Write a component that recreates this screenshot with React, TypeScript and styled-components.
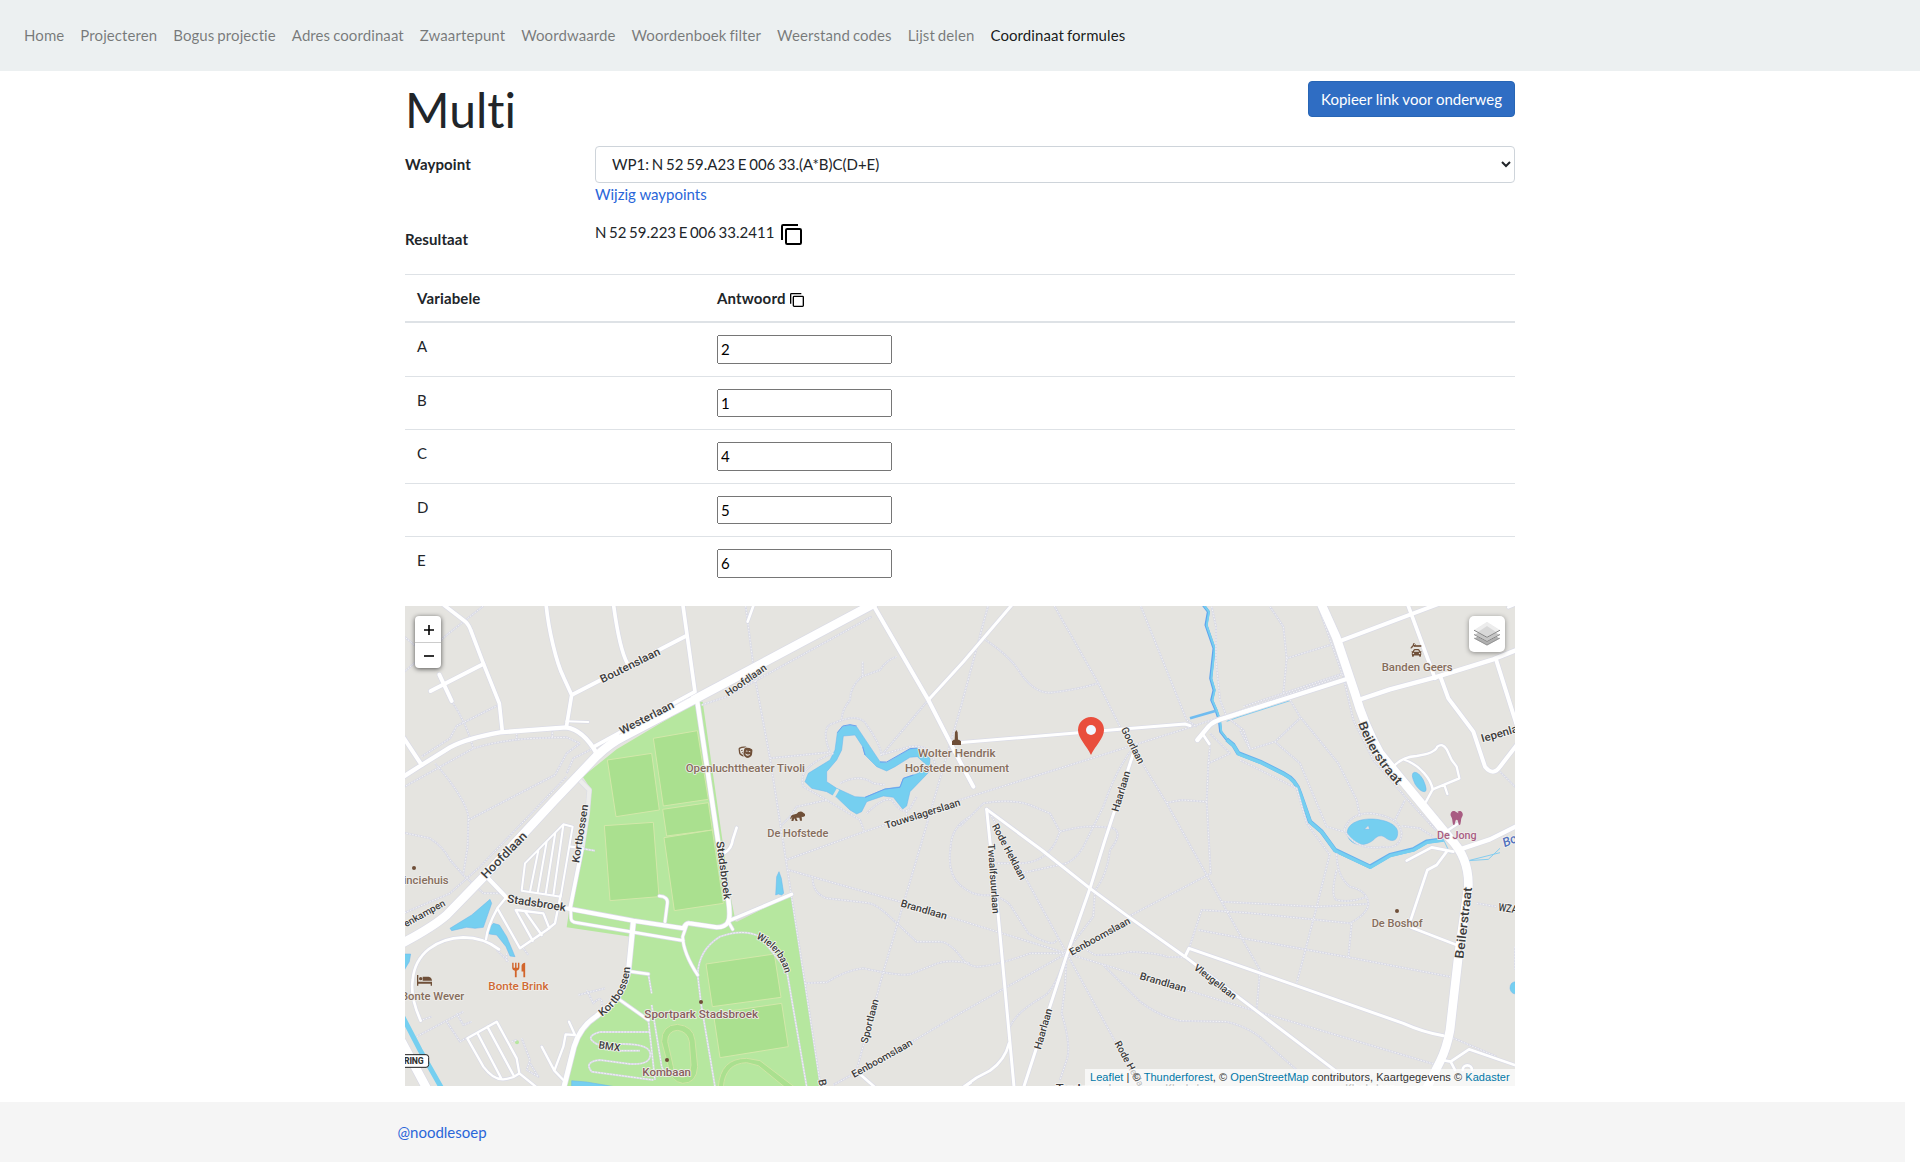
import React from "react";
import styled, { createGlobalStyle } from "styled-components";
import { FaTheaterMasks, FaTooth, FaCar, FaWrench } from "react-icons/fa";
import { MdRestaurant } from "react-icons/md";

const GlobalStyle = createGlobalStyle`
  *, *::before, *::after { box-sizing: border-box; }
  body {
    margin: 0;
    background: #fff;
    color: #212529;
    font-family: Lato, "Open Sans", sans-serif;
    font-size: 15px;
    line-height: 1.5;
    font-variant-ligatures: none;
  }
`;

const Page = styled.div`
  height: 1162px;
  display: flex;
  flex-direction: column;
  overflow: hidden;
`;

const Navbar = styled.nav`
  flex: none;
  display: flex;
  padding: 16px;
  background: #ecf0f1;
  margin-bottom: 10px;
  letter-spacing: 0.09px;
  word-spacing: -1px;
`;

const NavLink = styled.a<{ $active?: boolean }>`
  padding: 8px;
  color: ${(p) => (p.$active ? "rgba(0,0,0,.9)" : "rgba(0,0,0,.5)")};
  text-decoration: none;
  white-space: nowrap;
`;

const Container = styled.main`
  flex: none;
  width: 1110px;
  margin: 0 auto;
`;

const TitleRow = styled.div`
  display: flex;
  justify-content: space-between;
  align-items: flex-start;
  margin-bottom: 8px;
`;

const Title = styled.h1`
  margin: 0;
  font-size: 48px;
  font-weight: 400;
  line-height: 1.2;
`;

const CopyButton = styled.button`
  width: 207px;
  padding: 6px 0;
  border: 1px solid #2765b5;
  border-radius: 4px;
  background: #2f6dc3;
  color: #fff;
  font: inherit;
  white-space: nowrap;
`;

const FormRow = styled.div`
  display: grid;
  grid-template-columns: 190px 1fr;
  margin-bottom: 16px;
`;

const Label = styled.label`
  padding: 7px 0;
  height: 36.5px;
  font-weight: 700;
  letter-spacing: 0.1px;
`;

const Field = styled.div`
  display: flex;
  flex-direction: column;
  align-items: flex-start;
`;

const Select = styled.select`
  width: 100%;
  height: 36.5px;
  padding: 6px 12px;
  border: 1px solid #ced4da;
  border-radius: 4px;
  background: #fff;
  color: #212529;
  font: inherit;
  word-spacing: -1px;
`;

const Link = styled.a`
  color: #2a66d9;
  text-decoration: none;
`;

const Result = styled.div`
  display: flex;
  gap: 7px;
  word-spacing: -1.25px;
  svg { margin-top: 3px; }
`;

const Table = styled.table`
  width: 100%;
  margin-bottom: 16px;
  border-collapse: collapse;
  th, td {
    padding: 12px;
    border-top: 1px solid #dee2e6;
    text-align: left;
    vertical-align: top;
  }
  th { border-bottom: 2px solid #dee2e6; vertical-align: bottom; letter-spacing: 0.15px; }
  th:first-child { width: 300px; }
`;

const HeadCell = styled.span`
  display: flex;
  align-items: center;
  gap: 4px;
  height: 22.5px;
  svg { margin-top: 4px; }
`;

const Answer = styled.input`
  display: block;
  width: 174.5px;
  height: 28.5px;
  padding: 1px 2px;
  font: inherit;
`;

const MapBox = styled.section`
  position: relative;
  height: 480px;
  overflow: hidden;
  background: #e5e4e0;
`;

const MapCanvas = styled.svg`
  display: block;
  width: 1110px;
  height: 480px;
  font-family: Roboto, "Open Sans", sans-serif;
`;

const ZoomControl = styled.div`
  position: absolute;
  top: 10px;
  left: 10px;
  width: 26px;
  border-radius: 4px;
  background: #fff;
  box-shadow: 0 1px 5px rgba(0, 0, 0, 0.65);
`;

const ZoomButton = styled.a`
  display: flex;
  align-items: center;
  justify-content: center;
  height: 26px;
  padding: 2px 0 0 1px;
  & + & { border-top: 1px solid #ccc; }
`;

const LayersControl = styled.div`
  position: absolute;
  top: 10px;
  right: 10px;
  width: 36px;
  height: 36px;
  padding: 5px;
  border-radius: 5px;
  background: #fff;
  box-shadow: 0 1px 5px rgba(0, 0, 0, 0.4);
`;

const Attribution = styled.div`
  position: absolute;
  right: 0;
  bottom: 0;
  width: 430px;
  height: 17px;
  padding: 0 5px;
  background: rgba(255, 255, 255, 0.7);
  color: #333;
  font: 11px/16.5px "Liberation Sans", Arial, sans-serif;
  letter-spacing: 0.055px;
  white-space: nowrap;
  a { color: #0078a8; }
`;

const Footer = styled.footer`
  flex: none;
  width: 1905px;
  height: 60px;
  margin-top: 16px;
  padding-left: 397.5px;
  background: #f5f5f5;
  line-height: 60px;
`;

/* ---------- map data: three units per screen pixel ---------- */

const ROADS: [string, number][] = [
  ["M125,10L190,60Q205,70 212,90L250,190L298,310L307,395", 11],
  ["M438,10C445,90 470,190 490,230L515,285L499,382", 11],
  ["M640,10C648,70 660,150 682,190", 11],
  ["M515,285L858,108", 11],
  ["M848,10L885,275L582,440", 11],
  ["M499,364L565,366", 6],
  ["M10,530L65,495L150,442Q200,415 300,397L499,382Q550,390 590,460", 13],
  ["M10,412L65,495", 12],
  ["M118,224L155,303M92,273L250,192", 12],
  ["M10,1028Q100,980 140,945L250,832L460,605L590,468Q630,430 670,410L880,300L1420,12", 26],
  ["M546,745L510,925", 11],
  ["M255,825L320,893", 12],
  ["M490,923L700,962L850,985Q858,968 868,970L950,982Q975,982 985,965", 12],
  ["M892,306L955,730L985,900Q992,950 985,965", 13],
  ["M985,965L998,988M1010,683L998,720Q995,745 975,758", 8],
  ["M985,963L1175,883", 10],
  ["M512,925L513,955Q514,966 530,968L850,1022M860,975L848,1010Q850,1060 893,1125", 8],
  ["M778,888Q805,890 802,910L795,965", 8],
  ["M700,965L685,1115Q672,1170 640,1205L590,1248Q540,1280 522,1340L490,1468", 15],
  ["M695,1115L745,1122M660,1200L745,1260", 8],
  ["M507,1265L525,1305L497,1303L490,1340L463,1412L490,1440M463,1412L425,1340", 7],
  ["M202,1315L290,1265L350,1375L358,1420L410,1462M202,1315L250,1400Q280,1440 310,1438Q340,1435 358,1420M232,1298L305,1438M262,1280L340,1425", 7],
  ["M375,790L490,673L518,680L482,890L365,872L375,790M390,875L415,752M413,878L440,725M437,882L466,698M460,886L490,675", 6],
  ["M482,885L465,970L440,990L360,1045L292,925M350,930L430,940L448,985M347,930L398,1022M375,934L425,1005M320,890L292,925Q262,980 258,1018M512,740L530,742", 7],
  ["M62,1262Q30,1190 38,1140C45,1060 110,1015 190,1012Q250,1012 297,1048", 8],
  ["M5,1325L80,1465", 26],
  ["M1418,12L1585,300L1680,485L1720,560", 12],
  ["M1585,300L1690,185L1838,12", 9],
  ["M1043,65L1062,12", 8],
  ["M1675,428L2160,388L2355,372L2370,377", 9],
  ["M2392,420L2425,380Q2440,362 2480,352L2840,237", 13],
  ["M2410,405L2428,432", 8],
  ["M1760,628L1925,750L2070,865L2185,950L2355,1070L2540,1210L2810,1415L2870,1460", 9],
  ["M1760,628L1771,735L1795,950L1842,1460", 9],
  ["M2200,460L2115,720L2070,865L2000,1065L1870,1465", 9],
  ["M2355,1070L2367,1045L2540,1105L3010,1270Q3070,1297 3130,1307", 9],
  ["M1827,1330Q1815,1380 1770,1412L1730,1433L1692,1460", 8],
  ["M1380,1423L1425,1462M1692,1462L1712,1448", 8],
  ["M2763,10L2808,110L2865,280Q2890,370 2940,460L3010,545L3150,715Q3208,775 3205,860L3175,1070L3150,1290Q3140,1345 3120,1385L3080,1465", 26],
  ["M2815,125L3115,12", 12],
  ["M3022,10L3105,235", 11],
  ["M2875,300L2970,268L3105,232L3280,178L3350,150", 13],
  ["M3325,22L3350,12", 8],
  ["M3122,232L3145,295L3220,395L3255,500Q3280,530 3300,500L3350,435", 12],
  ["M3288,178L3350,375", 12],
  ["M2985,495Q3010,470 3050,468Q3105,460 3112,440Q3128,428 3140,448L3155,480L3170,500L3178,535L3098,568L3078,605M3015,480C3060,495 3095,540 3098,570M3133,555L3142,582", 7],
  ["M3145,690L3172,672", 8],
  ["M3180,748L3270,718L3350,678", 13],
  ["M3160,755L3095,742L3020,782M3140,755L3110,795L3082,810L3032,960M3032,982L3170,1035", 8],
  ["M3125,1380L3152,1385L3207,1348L3350,1397M3152,1385L3165,1410M3188,1410a14,14 0 1 1 28,0", 8],
];

const TRAILS = [
  "M10,218L140,105L250,18M10,108L50,140M155,303Q200,370 220,445M295,315L170,378L150,415L65,470",
  "M10,562L220,445Q300,420 400,415L500,412L540,430M105,490C150,540 210,620 205,660L203,740L190,820",
  "M205,660L465,525L500,460L540,430M590,440L520,475L500,520M500,530L240,800L150,880L10,940",
  "M10,698L90,715Q130,740 150,780L190,825L250,880H310M350,400V418M457,388V412",
  "M1037,18L1065,235L1110,475L1150,730L1215,1150L1262,1460M905,315L980,290L1415,50M1110,475L1290,457",
  "M1388,185V228M1490,170Q1460,180 1440,210L1385,230Q1350,260 1350,300Q1325,330 1325,360",
  "M1290,457Q1260,380 1300,370Q1380,335 1400,375Q1440,430 1445,465L1585,300M1440,465L1530,440Q1600,430 1605,500",
  "M1300,460Q1190,500 1210,560L1280,600L1380,660L1393,695M1280,600L1190,620L1170,650L1145,675M1320,550Q1380,520 1420,550L1455,555",
  "M1400,640Q1450,590 1475,600Q1510,650 1530,625L1550,590M1520,630V660",
  "M1158,780L1393,695L1710,590L2360,385L2540,325L2820,230",
  "M1764,18L1680,330L1558,750L1450,1115L1370,1410",
  "M1710,650Q1655,680 1652,740Q1640,820 1680,855Q1720,890 1760,885Q1820,890 1840,930L1885,1000Q1960,1045 1970,1020",
  "M1963,18L2095,250L2160,380L2300,610L2420,825L2540,1040L2580,1110L2570,1230",
  "M1755,118Q1830,170 1855,210Q1900,280 1950,278Q2020,272 2095,250M2222,18L2360,360L2390,380M2435,20L2448,80V180L2460,300L2480,350",
  "M2210,430Q2150,500 2110,620L2060,720Q2040,770 2000,790L1870,818M1680,680L1750,610Q1830,595 1890,615L1950,640L1980,695L1965,730Q1930,790 1860,790H1790",
  "M1980,695Q2060,670 2140,685Q2170,700 2130,750Q2120,830 2085,870L2080,950L2010,1040M2300,608L2345,600L2420,605L2425,490L2430,440",
  "M2420,605L2432,820L2185,950M2425,490L2490,460L2430,400M2480,350L2530,390L2550,445",
  "M1165,810L1500,905L1710,970L2000,1060L2540,1225L3110,1395",
  "M2000,1060H1890Q1780,1100 1730,1100Q1700,1095 1690,1080Q1650,1025 1620,1025H1550L1480,960Q1430,910 1400,908L1280,895Q1238,880 1238,835",
  "M1215,1150L1280,1147Q1340,1110 1390,1105Q1500,1130 1530,1123L1600,1095Q1640,1075 1710,1090",
  "M2000,1060L1680,1240L1545,1320L1300,1455M2000,1060Q1965,1170 1930,1190Q1850,1235 1830,1280",
  "M2000,1060L1995,1160L1985,1240Q2015,1340 2000,1380L1980,1440M1770,640L1880,840L2000,1060L2220,1460",
  "M2060,1050L2085,1065Q2150,1065 2190,1055Q2270,1058 2300,1070L2360,1072M2110,1095L2220,1205Q2280,1250 2340,1262L2480,1265Q2560,1285 2600,1330L2690,1410",
  "M2465,905L2750,920L2900,912M2367,1045L2405,930L2540,938L2850,970Q2905,940 2905,910Q2900,870 2850,860Q2810,830 2810,760",
  "M2395,990L2520,1013L2845,1072L3150,1130M2855,970L2845,1072M2790,760L2750,920L2690,1150M2810,810Q2790,890 2810,900Q2850,910 2900,890",
  "M2610,20L2650,80L2660,175L2650,280M2660,175L2790,135M2755,20L2830,230L2860,360L2920,480L3015,590L3130,715M2530,320L2825,222",
  "M2670,300L2700,350L2815,490L2870,600L2880,650M2700,355L2625,425L2550,448L2520,390M2625,425L2700,490L2780,680L2830,695",
  "M3015,600L2985,660M3300,515L3350,565M2520,480L2690,565L2720,670L2790,765M3230,910L3290,920M3150,1310L3290,1370M3345,1040V1110",
  "M2832,690Q2850,640 2910,640Q3000,650 3005,700Q3000,750 2950,740Q2870,755 2832,690M3005,678L3060,685L3100,710",
  "M893,1125Q895,1050 960,1010Q1030,985 1080,1010L1160,1110L1220,1460M893,1125L903,1210L945,1460M745,1122L755,1180M755,1215L785,1400L800,1430",
  "M750,1296H600Q550,1310 590,1332L660,1352H720M660,1332Q760,1330 750,1370Q745,1395 690,1392L600,1380Q550,1385 575,1415L760,1440M745,1260L765,1440",
  "M190,1235L50,1310M140,1265L180,1325L202,1312M170,1240L190,1275L215,1265M60,1262L95,1250M290,1050L325,1085M370,1045L385,1065M320,1060V1085",
  "M365,1315L390,1380L380,1410L415,1430L390,1390M535,1185L615,1165M560,1170L580,1210Q610,1180 605,1220M335,1325L350,1320M540,745L585,752",
];

const PITCHES = [
  "622,480 755,460 778,630 648,650",
  "760,415 892,392 925,598 790,618",
  "788,628 925,608 937,690 800,708",
  "613,677 760,667 777,890 630,902",
  "792,713 937,690 970,910 823,932",
  "918,1092 1123,1062 1143,1192 937,1220",
  "940,1240 1145,1210 1165,1340 960,1373",
];

const STREETS: [string, number, number, number, number, number][] = [
  ["Boutenslaan", 607, 250, 783, 162, 33],
  ["Westerlaan", 665, 404, 825, 322, 33],
  ["Hoofdlaan", 985, 290, 1102, 208, 30],
  ["Hoofdlaan", 258, 838, 383, 710, 36],
  ["Kortbossen", 537, 790, 565, 615, 31],
  ["Stadsbroek", 320, 907, 496, 934, 34],
  ["enkampen", 18, 982, 138, 915, 29],
  ["Stadsbroek", 949, 725, 972, 900, 32],
  ["Sportlaan", 1402, 1332, 1436, 1200, 30],
  ["Eenboomslaan", 1362, 1434, 1540, 1334, 30],
  ["Eenboomslaan", 2015, 1067, 2193, 969, 30],
  ["Brandlaan", 1500, 919, 1638, 959, 31],
  ["Brandlaan", 2217, 1137, 2356, 1177, 31],
  ["Touwslagerslaan", 1459, 687, 1683, 616, 31],
  ["Goorlaan", 2162, 388, 2216, 494, 31],
  ["Haarlaan", 2155, 637, 2191, 517, 31],
  ["Haarlaan", 1922, 1350, 1957, 1229, 31],
  ["Rode Heklaan", 1775, 678, 1862, 842, 30],
  ["Rode Heklaan", 2143, 1330, 2230, 1490, 30],
  ["Twaalfsuurlaan", 1763, 732, 1778, 942, 30],
  ["Vleugellaan", 2380, 1107, 2500, 1200, 30],
  ["Beilerstraat", 3190, 1077, 3216, 863, 37],
  ["Iepenlaan", 3247, 427, 3392, 385, 33],
  ["WZA-pad", 3294, 932, 3404, 948, 33],
  ["BMX", 595, 1345, 659, 1354, 31],
  ["B", 1255, 1440, 1259, 1460, 32],
  ["Kleekslaan", 2296, 1475, 2448, 1475, 32],
  ["Kleekslaan", 2836, 1475, 2986, 1475, 32],
  ["Tuukwegl", 1967, 1476, 2135, 1476, 32],
];

const POIS: [string, number, number, number, string][] = [
  ["Openluchttheater Tivoli", 857, 517, 358, "#866d5c"],
  ["De Hofstede", 1102, 710, 183, "#866d5c"],
  ["Wolter Hendrik", 1554, 472, 233, "#866d5c"],
  ["Hofstede monument", 1515, 515, 312, "#866d5c"],
  ["Banden Geers", 2945, 212, 213, "#866d5c"],
  ["De Jong", 3111, 717, 119, "#a85c82"],
  ["De Boshof", 2915, 982, 153, "#866d5c"],
  ["Bonte Brink", 265, 1170, 181, "#cf6a35"],
  ["Bonte Wever", 3, 1199, 190, "#866d5c"],
  ["provinciehuis", -56, 851, 202, "#866d5c"],
  ["Sportpark Stadsbroek", 733, 1253, 341, "#865f5c"],
  ["Kombaan", 727, 1429, 146, "#865f5c"],
];

const WATER = [
  "M150,985L215,945L270,898L275,910L250,982L225,985L200,982L155,992Z",
  "M266,985L280,970L298,975L320,1010L345,1070L330,1068L318,1040L290,1005L268,1002Z",
  "M10,1062L32,1062L28,1085L10,1115Z",
  "M515,1442L560,1446L655,1462H515Z",
  "M1127,885L1130,830L1137,815L1144,835L1151,880L1145,885L1135,882Z",
  "M3043,517Q3055,515 3070,540Q3085,575 3073,575Q3060,575 3045,552Q3030,520 3043,517Z",
  "M2842,695C2845,665 2890,655 2920,657C2960,660 2995,675 2993,700C2992,728 2970,725 2955,712C2940,702 2930,710 2920,720C2890,745 2840,735 2842,695ZM2893,688L2905,676L2909,688Z",
  "M3350,1145Q3330,1145 3330,1165Q3332,1182 3350,1182Z",
  "M1312,398L1328,380L1350,375L1370,380L1410,440L1440,485L1460,488L1530,447L1552,445L1590,475L1588,515L1530,575L1520,618L1508,627L1480,592L1450,588L1400,605L1385,635L1370,642L1350,630L1310,592L1280,575L1235,565L1215,545L1225,520L1290,480L1305,450ZM1330,408L1365,405L1388,440L1395,465L1430,500L1460,513L1485,500L1530,472L1552,470L1580,495L1555,520L1510,535L1500,560L1455,567L1395,592L1365,590L1310,565L1280,545V515L1310,480L1325,450Z",
];

const STREAM =
  "M2410,15L2425,35L2418,75L2442,145L2432,235L2442,270L2435,300L2448,330L2458,360L2462,395L2480,418";
const RIVER =
  "M2480,418L2500,435L2515,460L2580,485L2650,520Q2690,540 2700,580L2730,665L2765,695L2805,750L2910,800L2970,765L3040,748L3080,725L3130,718";

const CopyIcon = ({ size }: { size: number }) => (
  <svg width={size} height={size} viewBox="0 0 21 21" fill="none" stroke="#000" strokeWidth={2}>
    <path d="M1 16V2.2Q1 1 2.2 1H17" />
    <rect x="5" y="5" width="15" height="15" rx="1.2" />
  </svg>
);

const StreetLabel = ({ text, x1, y1, x2, y2, size }: {
  text: string; x1: number; y1: number; x2: number; y2: number; size: number;
}) => {
  const angle = (Math.atan2(y2 - y1, x2 - x1) * 180) / Math.PI;
  return (
    <text transform={`translate(${x1} ${y1}) rotate(${angle})`} fontSize={size}
      textLength={Math.hypot(x2 - x1, y2 - y1)} lengthAdjust="spacingAndGlyphs">
      {text}
    </text>
  );
};

const CityMap = () => (
  <MapCanvas viewBox="15 18 3330 1440">
    <path fill="#b6e79f" d="M548,530L650,448L890,305L908,305L990,880L1007,965L1175,885L1262,1460H495L522,1350Q540,1290 590,1248L640,1205Q680,1160 690,1100L692,1010L500,982L512,900L548,740L575,570Z" />
    <g fill="#aae08f" stroke="#d3e8aa" strokeWidth={3}>
      {PITCHES.map((p) => <polygon key={p} points={p} />)}
    </g>
    <g fill="none" stroke="#cfe6a6" strokeWidth={3}>
      <path fill="#aae08f" d="M785,1325Q785,1275 832,1273Q880,1278 885,1320L893,1400Q890,1450 848,1450Q812,1445 805,1400Z" />
      <path fill="#b6e79f" d="M803,1325Q803,1293 832,1291Q862,1294 868,1325L873,1395Q870,1430 848,1432Q822,1428 820,1400Z" />
      <path fill="#aae08f" d="M955,1462Q960,1375 1040,1375L1080,1382L1185,1462" />
      <path fill="#b6e79f" d="M970,1462Q975,1390 1040,1388L1075,1397L1155,1462" />
    </g>
    <circle cx={351} cy={1327} r={6} fill="#b6e79f" />
    <path d="M1010,966L1070,935L1012,958Z" fill="#dadad6" />
    <g fill="#75cff0" fillRule="evenodd" stroke="#68b4ee" strokeWidth={1.5}>
      {WATER.map((d) => <path key={d} d={d} />)}
    </g>
    <g fill="none" strokeLinejoin="round">
      <path d="M1312,398L1328,378L1350,374L1370,378M1388,440L1395,465M1440,486L1460,486L1530,446L1552,444M1395,592L1455,567L1500,562L1510,535L1540,525" stroke="#69a2ef" strokeWidth={3} />
      <path d={STREAM} stroke="#5fa4ee" strokeWidth={9} />
      <path d={STREAM} stroke="#75cff0" strokeWidth={6} transform="translate(2 1)" />
      <path d={RIVER} stroke="#67b1ee" strokeWidth={13} />
      <path d={RIVER} stroke="#75cff0" strokeWidth={10} transform="translate(1 2)" />
      <path d="M2370,355L2448,332" stroke="#6fbcf0" strokeWidth={8} />
      <path d="M2480,364L2520,350L2670,302M3130,718L3150,760M3205,782L3265,778L3300,745M3205,782L3300,758" stroke="#85cdf0" strokeWidth={3} />
      <path d="M8,1250L60,1350L128,1470" stroke="#75cff0" strokeWidth={15} />
      <path d="M1300,592L1314,568" stroke="#e5e4e0" strokeWidth={9} />
    </g>
    <g fill="none" strokeLinejoin="round">
      <g stroke="#d8d9e5" strokeWidth={6}>
        {TRAILS.map((d) => <path key={d} d={d} />)}
      </g>
      <g stroke="#f4f4f6" strokeWidth={3} strokeDasharray="5 4">
        {TRAILS.map((d) => <path key={d} d={d} />)}
      </g>
      <path d="M538,540L568,570L562,640L546,745" stroke="#dcdde5" strokeWidth={16} />
      <path d="M538,540L568,570L562,640L546,745" stroke="#ededec" strokeWidth={12} />
      <g stroke="#dadbe6" strokeLinecap="round">
        {ROADS.map(([d, w]) => <path key={d} d={d} strokeWidth={w + 4} />)}
      </g>
      <g stroke="#fff" strokeLinecap="round">
        {ROADS.map(([d, w]) => <path key={d} d={d} strokeWidth={w} />)}
      </g>
      <path d="M658,403L748,358L873,290" stroke="#dadbe6" strokeWidth={2} />
    </g>

    <g fill="#3c3c3c" stroke="#f4f3f1" strokeWidth={5} paintOrder="stroke" strokeLinejoin="round" fontWeight={500}>
      {STREETS.map(([text, x1, y1, x2, y2, size]) => (
        <StreetLabel key={`${text}${x1}`} {...{ text, x1, y1, x2, y2, size }} />
      ))}
      <defs>
        <path id="kortbossen" d="M606,1250Q688,1190 691,1090" />
        <path id="wielerbaan" d="M1068,1015Q1140,1050 1156,1125" />
        <path id="beilerstraat" d="M2874,370Q2908,470 2995,560" />
      </defs>
      <text fontSize={32}><textPath href="#kortbossen" textLength={177} lengthAdjust="spacingAndGlyphs">Kortbossen</textPath></text>
      <text fontSize={30}><textPath href="#wielerbaan" textLength={141} lengthAdjust="spacingAndGlyphs">Wielerbaan</textPath></text>
      <text fontSize={37}><textPath href="#beilerstraat" textLength={222} lengthAdjust="spacingAndGlyphs">Beilerstraat</textPath></text>
      <text transform="translate(3314 742) rotate(-24)" fontSize={38} fontStyle="italic" fill="#5272bd">Bosbeek</text>
    </g>
    <g stroke="#f0efec" strokeWidth={5} paintOrder="stroke" strokeLinejoin="round" fontSize={35} fontWeight={500}>
      {POIS.map(([text, x, y, len, fill]) => (
        <text key={text} x={x} y={y} fill={fill} textLength={len} lengthAdjust="spacingAndGlyphs">{text}</text>
      ))}
    </g>

    <g fill="#6f4f38">
      <circle cx={42} cy={804} r={6} />
      <circle cx={903} cy={1206} r={6} />
      <circle cx={801} cy={1380} r={6} />
      <circle cx={2991} cy={933} r={6} />
      <path d="M1656,435V424L1661,419H1664L1665,397L1669,390L1673,397L1674,419H1677L1683,424V435Z" />
      <path d="M1171,657Q1171,646 1179,644L1190,641Q1196,633 1206,635L1215,642L1215,648L1209,651L1205,650L1206,662H1200L1198,653L1189,653L1193,663H1187L1183,655L1180,663H1174L1177,652Q1174,652 1174,658Z" />
      <path d="M51,1125H55V1145H96V1157H92V1151H55V1157H51ZM68,1130H86Q95,1131 96,1142H68ZM57,1136a5,5 0 1 1 10,0a5,5 0 1 1 -10,0Z" />
    </g>
    <FaTheaterMasks x={1015} y={435} size={43} color="#6f4f38" />
    <FaWrench x={3031} y={129} size={17} color="#6f4f38" />
    <path d="M3042,138H3064" stroke="#6f4f38" strokeWidth={5} />
    <FaCar x={3034} y={143} size={31} color="#6f4f38" />
    <FaTooth x={3149} y={633} size={42} color="#a85c82" />
    <MdRestaurant x={330} y={1084} size={52} color="#d2652b" />
    <rect x={-40} y={1364} width={126} height={38} rx={8} fill="#fff" stroke="#222" strokeWidth={3} />
    <text x={12} y={1392} fontSize={26} fontWeight={800} fill="#333" textLength={59}>RING</text>
    <path fill="#e94e3d" d="M2073,465C2060,437 2034,415 2034,390A39,39 0 0 1 2112,390C2112,415 2086,437 2073,465Z" />
    <circle cx={2073} cy={390} r={15} fill="#f0f7ff" />
  </MapCanvas>
);

const LayersIcon = () => (
  <svg width="26" height="26" viewBox="0 0 26 26">
    <path d="M0 17.5L13 24.5L26 17.5L13 11Z" fill="#b0b0b0" />
    <path d="M0 17L13 24L26 17" fill="none" stroke="#808080" strokeWidth=".6" />
    <path d="M0 13.5L13 20.5L26 13.5L13 7Z" fill="#c6c6c6" stroke="#fff" strokeWidth=".7" />
    <path d="M0 13.5L13 20.5L26 13.5" fill="none" stroke="#6a6a6a" strokeWidth=".8" />
    <path d="M0 9.2L13 16.3L26 9.2L13 1Z" fill="#d8d8d8" stroke="#fff" strokeWidth=".6" />
    <path d="M0 9.2L13 1L26 9.2L22 11L13 5L4 11Z" fill="#ededed" />
    <path d="M0 9.2L13 16.3L26 9.2" fill="none" stroke="#6a6a6a" strokeWidth=".8" />
  </svg>
);

const NAV = ["Home", "Projecteren", "Bogus projectie", "Adres coordinaat", "Zwaartepunt", "Woordwaarde",
  "Woordenboek filter", "Weerstand codes", "Lijst delen", "Coordinaat formules"];

const VARIABLES = [["A", "2"], ["B", "1"], ["C", "4"], ["D", "5"], ["E", "6"]];

export default function App() {
  return (
    <Page>
      <GlobalStyle />
      <Navbar>
        {NAV.map((item, i) => <NavLink key={item} $active={i === NAV.length - 1}>{item}</NavLink>)}
      </Navbar>
      <Container>
        <TitleRow>
          <Title>Multi</Title>
          <CopyButton>Kopieer link voor onderweg</CopyButton>
        </TitleRow>
        <FormRow>
          <Label>Waypoint</Label>
          <Field>
            <Select><option>WP1: N 52 59.A23 E 006 33.(A*B)C(D+E)</option></Select>
            <Link>Wijzig waypoints</Link>
          </Field>
        </FormRow>
        <FormRow>
          <Label>Resultaat</Label>
          <Result>N 52 59.223 E 006 33.2411 <CopyIcon size={21} /></Result>
        </FormRow>
        <Table>
          <thead>
            <tr>
              <th>Variabele</th>
              <th><HeadCell>Antwoord <CopyIcon size={14} /></HeadCell></th>
            </tr>
          </thead>
          <tbody>
            {VARIABLES.map(([name, value]) => (
              <tr key={name}>
                <td>{name}</td>
                <td><Answer defaultValue={value} /></td>
              </tr>
            ))}
          </tbody>
        </Table>
        <MapBox>
          <CityMap />
          <ZoomControl>
            <ZoomButton>
              <svg width="10" height="10" stroke="#000" strokeWidth="1.6"><path d="M0 5H10M5 0V10" /></svg>
            </ZoomButton>
            <ZoomButton>
              <svg width="10" height="10" stroke="#000" strokeWidth="1.6"><path d="M0 5H10" /></svg>
            </ZoomButton>
          </ZoomControl>
          <LayersControl><LayersIcon /></LayersControl>
          <Attribution>
            <a>Leaflet</a> | © <a>Thunderforest</a>, © <a>OpenStreetMap</a> contributors, Kaartgegevens © <a>Kadaster</a>
          </Attribution>
        </MapBox>
      </Container>
      <Footer><Link>@noodlesoep</Link></Footer>
    </Page>
  );
}
